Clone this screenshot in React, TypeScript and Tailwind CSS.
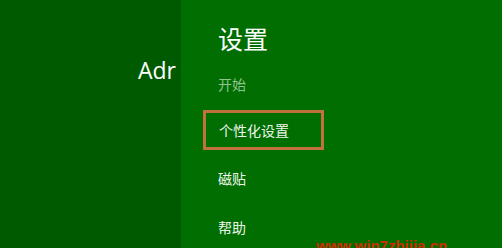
export default function App() {
  const cjk = { fontFamily: '"Noto Sans CJK SC", "Noto Sans", sans-serif' }
  return (
    <div className="relative flex h-[248px] w-[502px] overflow-hidden" style={cjk}>
      <div className="flex w-[181px] shrink-0 justify-end bg-[#005a00] pt-[55px] pr-[5px]">
        <span
          className="text-[23px] leading-[30px] text-white"
          style={{ fontFamily: '"Open Sans", "Liberation Sans", sans-serif' }}
        >
          Adr
        </span>
      </div>
      <div className="flex flex-1 flex-col bg-[#006e00] pl-[22px] pt-[22px]">
        <div className="pl-[15px] text-[25px] leading-[32px] text-white">设置</div>
        <div className="mt-[20px] pl-[15px] text-[14px] leading-[20px] text-[#8fc48f]">开始</div>
        <div className="mt-[16px] flex h-[40px] w-[121px] items-center border-[3px] border-[#c2703c] pl-[13px] text-[14px] text-[#eef6ee]">
          个性化设置
        </div>
        <div className="mt-[18px] pl-[15px] text-[14px] leading-[20px] text-[#eef6ee]">磁贴</div>
        <div className="mt-[29px] pl-[15px] text-[14px] leading-[20px] text-[#eef6ee]">帮助</div>
      </div>
      <div
        className="absolute left-[316px] top-[236px] text-[15px] font-bold leading-[20px] text-[#d42a00]"
        style={{ fontFamily: '"Liberation Sans", sans-serif' }}
      >
        www.win7zhijia.cn
      </div>
    </div>
  )
}
